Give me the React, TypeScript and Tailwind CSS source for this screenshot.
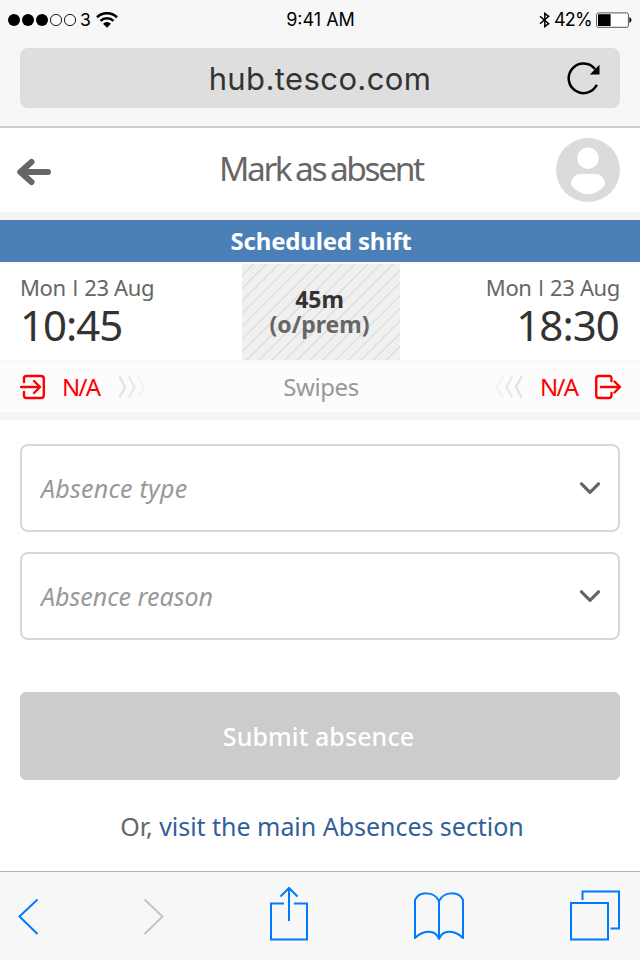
import type { ReactNode } from "react";

function StatusBar() {
  return (
    <div className="flex h-10 items-center justify-between pl-2 pr-[8px] font-[Inter,sans-serif] text-[18px] leading-10 text-black">
      <div className="flex w-[200px] items-center">
        <svg width="70" height="14" viewBox="0 0 70 14">
          <circle cx="6" cy="7" r="6" />
          <circle cx="20" cy="7" r="6" />
          <circle cx="34" cy="7" r="6" />
          <circle cx="48" cy="7" r="5.6" fill="none" stroke="#000" strokeWidth="0.9" />
          <circle cx="62" cy="7" r="5.6" fill="none" stroke="#000" strokeWidth="0.9" />
        </svg>
        <span className="ml-[2px] w-[12px] text-[17.5px] tracking-[-0.4px]">3</span>
        <svg className="ml-1" width="22" height="16" viewBox="0 0 22 16">
          <g fill="none" stroke="#000" strokeWidth="2.6">
            <path d="M1 5.3a14.3 14.3 0 0 1 20 0" />
            <path d="M4.5 8.9a9.3 9.3 0 0 1 13 0" strokeWidth="2.4" />
          </g>
          <path d="M7 11.8a5.6 5.6 0 0 1 8 0L11 15.8z" />
        </svg>
      </div>
      <span className="pl-px text-[18px] tracking-[0px]">9:41 AM</span>
      <div className="flex w-[200px] items-center justify-end">
        <svg width="12" height="16" viewBox="0 0 12 16" fill="none" stroke="#000" strokeWidth="1.5">
          <path d="M1 4.2l8.6 7.4L5.800 14.500V1.500l3.8 2.900L1 11.8" />
        </svg>
        <span className="ml-[3px] w-[39px] whitespace-nowrap text-[18px] tracking-[-0.8px]">42%</span>
        <svg className="ml-[3px]" width="36" height="16" viewBox="0 0 36 16">
          <rect x="0.6" y="0.9" width="31.8" height="14.4" rx="1.8" fill="#fff" stroke="#555" />
          <rect x="2" y="2.2" width="12.6" height="11.8" />
          <path d="M33.4 5.2c1.7.6 2 1.6 2 2.8s-.3 2.200-2 2.800z" />
        </svg>
      </div>
    </div>
  );
}

function Header() {
  return (
    <header className="flex h-[84px] items-center justify-between bg-white px-5 pl-4">
      <svg className="mt-[4px]" width="36" height="28" viewBox="0 0 36 28" fill="none" stroke="#666" strokeWidth="6" strokeLinecap="round" strokeLinejoin="round">
        <path d="M15.500 4L4.300 14l11.200 10M6 14h26" />
      </svg>
      <h1 className="w-[206px] whitespace-nowrap pb-[4px] pl-[18px] text-[33.500px] leading-[80px] tracking-[-2.400px] text-[#666] [word-spacing:-1.500px]">Mark as absent</h1>
      <svg width="64" height="64" viewBox="0 0 64 64">
        <circle cx="32" cy="32" r="32" fill="#dbdbdb" />
        <circle cx="32" cy="20.300" r="10.700" fill="#fff" />
        <path d="M24 36h16c5 0 9 4.500 9 10.200C45 52.500 39 56 32 56s-13-3.500-17-9.800C15 40.500 19 36 24 36z" fill="#fff" />
      </svg>
    </header>
  );
}

function Chevrons({ left = false }: { left?: boolean }) {
  return (
    <svg className={left ? "-scale-x-100" : ""} width="28" height="22" viewBox="0 0 28 22" fill="none" strokeWidth="2.400">
      <path d="M1.200 .5l6 10.500-6 10.500" stroke="#dfe4e8" />
      <path d="M10.700 .5l6 10.500-6 10.500" stroke="#e6eaed" />
      <path d="M20.200 .5l6 10.500-6 10.500" stroke="#f3f4f5" />
    </svg>
  );
}

const hatchOffsets = Array.from({ length: 20 }, (_, i) => 11.7 + i * 12.7);

function ShiftDate() {
  return (
    <span className="mt-[7px] text-[22px] leading-8 tracking-[-0.360px] text-[#666]">
      Mon <span className="px-[1px] font-['Open_Sans',sans-serif]">I</span> 23 Aug
    </span>
  );
}

function Shift() {
  return (
    <section>
      <h2 className="h-[42px] bg-[#4a7fb8] pl-[2px] text-center text-[24px] font-bold leading-[41px] tracking-[-0.180px] text-white">Scheduled shift</h2>
      <div className="flex h-[100px] border-y-2 border-[#f8f8f8] bg-white">
        <div className="flex w-[242px] flex-col pl-5">
          <ShiftDate />
          <span className="mt-[2px] text-[42px] leading-10 tracking-[-1px] text-[#333]">10:45</span>
        </div>
        <div className="relative flex w-[158px] flex-col items-center overflow-hidden bg-[#f0f0f0] pr-[3px] pt-[23px] text-[23px] font-bold leading-[25px]">
          <svg className="absolute inset-0" width="158" height="96" stroke="#dedede" strokeWidth="1.500">
            {hatchOffsets.map((k) => (
              <line key={k} x1={k} y1={0} x2={k - 100} y2={100} />
            ))}
          </svg>
          <span className="relative tracking-[0px] text-[#333]">45m</span>
          <span className="relative tracking-[0px] text-[#666]">(o/prem)</span>
        </div>
        <div className="flex w-[240px] flex-col items-end pr-5">
          <ShiftDate />
          <span className="mt-[2px] pr-px text-[42px] leading-10 tracking-[-0.900px] text-[#333]">18:30</span>
        </div>
      </div>
      <div className="flex h-[50px] items-center justify-between bg-[#fcfcfc] px-5 pr-[18px] text-[24px] leading-[50px]">
        <div className="flex w-[140px] items-center text-[#f00]">
          <svg width="26" height="26" viewBox="0 0 26 26" fill="none" stroke="#f00" strokeWidth="2.400" strokeLinecap="round" strokeLinejoin="round">
            <path d="M4 8V4.500Q4 2 6.500 2H21q2.800 0 2.800 2.800v16.400q0 2.800-2.800 2.800H6.500Q4 24 4 21.500V18M1 13h18M14 7l6 6-6 6" />
          </svg>
          <span className="ml-[16px] w-[40px] whitespace-nowrap text-[24px] tracking-[-1.700px]">N/A</span>
          <span className="ml-[16px]"><Chevrons /></span>
        </div>
        <span className="tracking-[-0.400px] text-[#999]">Swipes</span>
        <div className="flex w-[140px] items-center justify-end text-[#f00]">
          <Chevrons left />
          <span className="ml-[17px] w-[40px] whitespace-nowrap text-[24px] tracking-[-1.700px]">N/A</span>
          <svg className="ml-[14px]" width="28" height="26" viewBox="0 0 28 26" fill="none" stroke="#f00" strokeWidth="2.400" strokeLinecap="round" strokeLinejoin="round">
            <path d="M17.500 7V4.500Q17.500 2 15 2H5Q2.200 2 2.200 4.800v16.400Q2.200 24 5 24h10q2.500 0 2.500-2.500V19M7 13h18M20.500 7.500L26 13l-5.500 5.500" />
          </svg>
        </div>
      </div>
    </section>
  );
}

function Field({ children, className }: { children: ReactNode; className?: string }) {
  return (
    <div className="flex h-[88px] items-center justify-between rounded-[8px] border-2 border-[#d8d8d8] pl-[19px] pr-[17px] text-[25px] italic text-[#999]">
      <span className={`mt-[2px] whitespace-nowrap ${className ?? ""}`}>{children}</span>
      <svg width="22" height="14" viewBox="0 0 22 14" fill="none" stroke="#666" strokeWidth="3.200" strokeLinecap="round" strokeLinejoin="round">
        <path d="M2.500 2.800L11 11.300l8.500-8.500" />
      </svg>
    </div>
  );
}

function Toolbar() {
  return (
    <nav className="mt-auto flex h-[89px] border-t border-[#b2b2b2] bg-[#f7f7f7] text-[#007aff]">
      <svg width="640" height="88" viewBox="0 872 640 88" fill="none" stroke="currentColor" strokeWidth="2">
        <path d="M37.500 899.500L19.500 916.500l18 17.500" />
        <path d="M144.500 899.500l18 17-18 17.500" stroke="#c4c4c4" />
        <path d="M284 903.500h-13v36h36v-36h-13M289 921v-32.500M280.500 896.500l8.500-8.500 8.500 8.500" />
        <path d="M439 901c-5-10-20-10-24-1v38c7-7 20-10 24 1zM439 901c5-10 20-10 24-1v38c-7-7-20-10-24 1z" strokeLinejoin="round" />
        <path d="M571 903h37v36.500h-37zM582.500 900v-8.500H619v37h-8.500" />
      </svg>
    </nav>
  );
}

export default function App() {
  return (
    <main className="flex h-[960px] w-[640px] flex-col overflow-hidden bg-white font-['Noto_Sans','Open_Sans',sans-serif]">
      <div className="h-[128px] shrink-0 border-b-2 border-[#ccc] bg-[#f7f7f7]">
        <StatusBar />
        <div className="mx-5 mt-2 flex h-[60px] items-center justify-between rounded-[8px] bg-[#dedede] pr-[19px] font-[Inter,sans-serif]">
          <span className="w-[53px]" />
          <span className="pt-[2px] text-[31px] leading-[58px] tracking-[0.400px] text-[#333]">hub.tesco.com</span>
          <svg width="34" height="34" viewBox="0 0 34 34">
            <path d="M29.800 23.800A14.800 14.800 0 1 1 28 8" fill="none" stroke="#000" strokeWidth="2.500" />
            <path d="M32.500 3.800v9.700H22.800z" />
          </svg>
        </div>
      </div>
      <Header />
      <div className="h-2 bg-[#f5f5f5]" />
      <Shift />
      <div className="h-2 bg-[#f5f5f5]" />
      <form className="mx-5 mt-6 flex flex-col gap-5">
        <Field className="tracking-[0.240px]">Absence type</Field>
        <Field>Absence reason</Field>
        <button type="button" className="mt-8 h-[88px] rounded-[6px] bg-[#ccc] pr-[3px] pt-[2px] text-[25px] font-medium tracking-[0.100px] text-white">Submit absence</button>
      </form>
      <p className="mt-[26px] whitespace-nowrap pl-[4px] text-center text-[25px] leading-10 tracking-[-0.030px] text-[#666]">
        Or, <a className="text-[#335f99]">visit the main Absences section</a>
      </p>
      <Toolbar />
    </main>
  );
}
